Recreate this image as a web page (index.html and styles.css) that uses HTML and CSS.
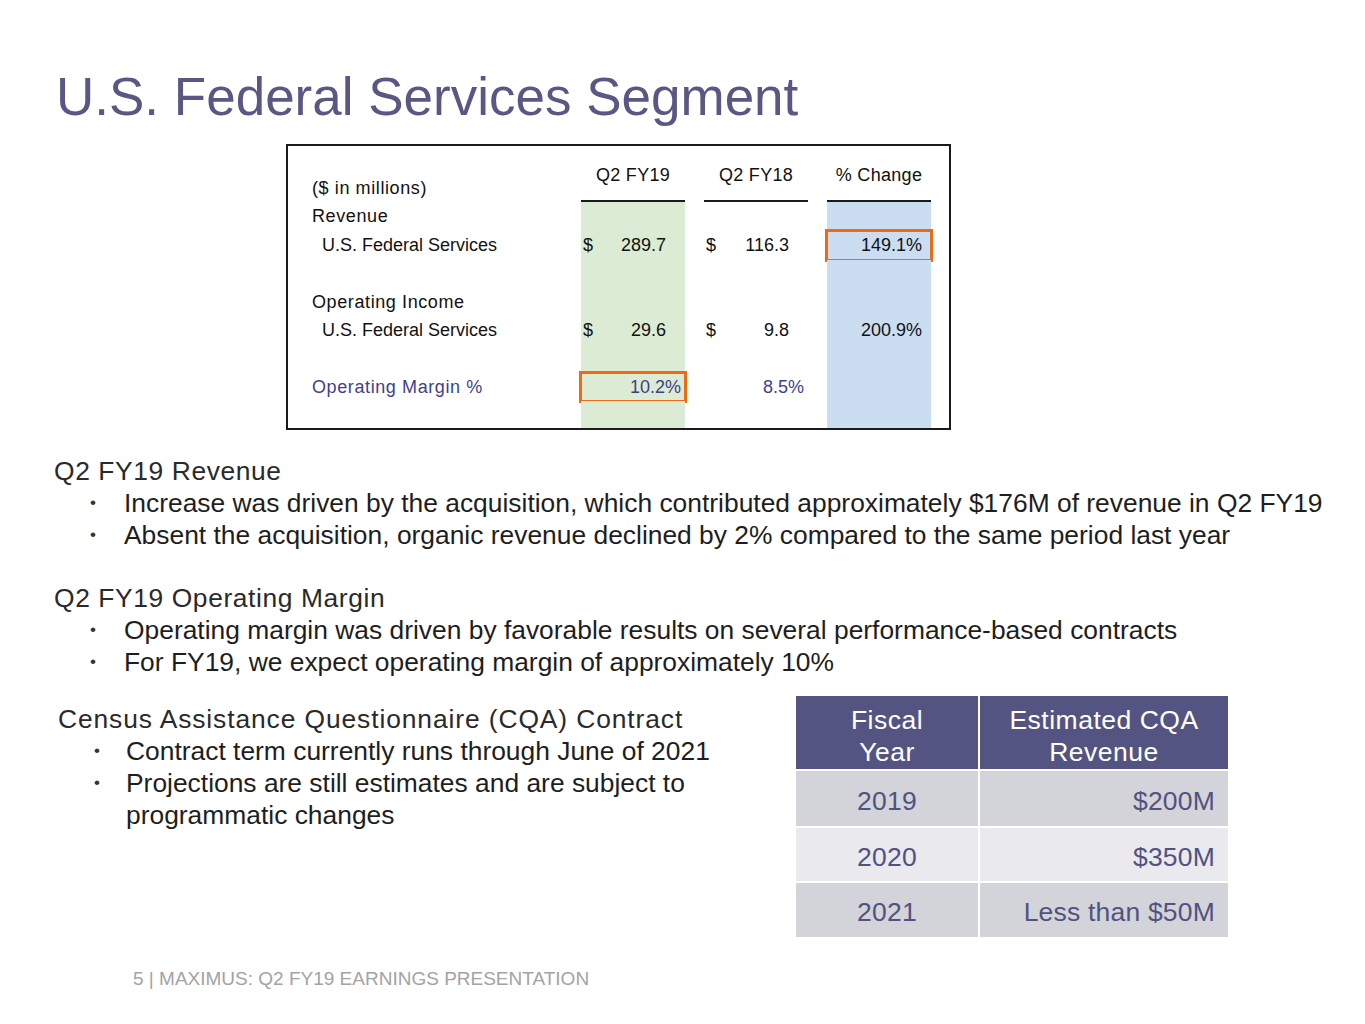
FILE: index.html
```html
<!DOCTYPE html>
<html>
<head>
<meta charset="utf-8">
<link rel="stylesheet" href="styles.css">
</head>
<body>
<div class="slide">
  <h1 class="title">U.S. Federal Services Segment</h1>

  <div class="fin">
    <div class="fin-grid">
      <!-- header row -->
      <div class="c lbl hdr-lbl">($ in millions)</div>
      <div class="c colh">Q2 FY19</div>
      <div class="c sp"></div>
      <div class="c colh">Q2 FY18</div>
      <div class="c sp"></div>
      <div class="c colh">% Change</div>
      <div class="c sp"></div>

      <!-- Revenue -->
      <div class="c lbl">Revenue</div>
      <div class="c g"></div><div class="c sp"></div><div class="c"></div><div class="c sp"></div><div class="c b"></div><div class="c sp"></div>

      <div class="c lbl sub">U.S. Federal Services</div>
      <div class="c g num"><span>$</span><span class="v">289.7</span></div><div class="c sp"></div>
      <div class="c num"><span>$</span><span class="v">116.3</span></div><div class="c sp"></div>
      <div class="c b pct hl">149.1%</div><div class="c sp"></div>

      <div class="c lbl"></div>
      <div class="c g"></div><div class="c sp"></div><div class="c"></div><div class="c sp"></div><div class="c b"></div><div class="c sp"></div>

      <!-- Operating income -->
      <div class="c lbl">Operating Income</div>
      <div class="c g"></div><div class="c sp"></div><div class="c"></div><div class="c sp"></div><div class="c b"></div><div class="c sp"></div>

      <div class="c lbl sub">U.S. Federal Services</div>
      <div class="c g num"><span>$</span><span class="v">29.6</span></div><div class="c sp"></div>
      <div class="c num"><span>$</span><span class="v">9.8</span></div><div class="c sp"></div>
      <div class="c b pct">200.9%</div><div class="c sp"></div>

      <div class="c lbl"></div>
      <div class="c g"></div><div class="c sp"></div><div class="c"></div><div class="c sp"></div><div class="c b"></div><div class="c sp"></div>

      <!-- Operating margin -->
      <div class="c lbl om">Operating Margin %</div>
      <div class="c g pm om hl">10.2%</div><div class="c sp"></div>
      <div class="c pm om">8.5%</div><div class="c sp"></div>
      <div class="c b"></div><div class="c sp"></div>

      <div class="c lbl"></div>
      <div class="c g"></div><div class="c sp"></div><div class="c"></div><div class="c sp"></div><div class="c b"></div><div class="c sp"></div>
    </div>
  </div>

  <div class="sec">
    <div class="sec-h">Q2 FY19 Revenue</div>
    <ul class="bul">
      <li>Increase was driven by the acquisition, which contributed approximately $176M of revenue in Q2 FY19</li>
      <li>Absent the acquisition, organic revenue declined by 2% compared to the same period last year</li>
    </ul>
  </div>

  <div class="sec sec2">
    <div class="sec-h">Q2 FY19 Operating Margin</div>
    <ul class="bul">
      <li>Operating margin was driven by favorable results on several performance-based contracts</li>
      <li>For FY19, we expect operating margin of approximately 10%</li>
    </ul>
  </div>

  <div class="cqa">
    <div class="cqa-text">
      <div class="sec-h cqa-h">Census Assistance Questionnaire (CQA) Contract</div>
      <ul class="bul bul2">
        <li>Contract term currently runs through June of 2021</li>
        <li>Projections are still estimates and are subject to programmatic changes</li>
      </ul>
    </div>
    <div class="cqa-table">
      <div class="th">Fiscal<br>Year</div>
      <div class="th">Estimated CQA<br>Revenue</div>
      <div class="td yr dark">2019</div>
      <div class="td amt dark">$200M</div>
      <div class="td yr light">2020</div>
      <div class="td amt light">$350M</div>
      <div class="td yr dark">2021</div>
      <div class="td amt dark">Less than $50M</div>
    </div>
  </div>

  <div class="footer">5 | MAXIMUS: Q2 FY19 EARNINGS PRESENTATION</div>
</div>
</body>
</html>
```

FILE: styles.css
```css
* { box-sizing: border-box; }
html, body { margin: 0; padding: 0; background: #fff; }
body { font-family: "Liberation Sans", Arial, sans-serif; color: #222; }

.slide { width: 1365px; height: 1024px; padding-top: 65px; }

.title {
  margin: 0 0 15px 56px;
  font-size: 53px;
  line-height: 64px;
  font-weight: normal;
  color: #595884;
}

.fin {
  margin-left: 286px;
  width: 665px;
  height: 286px;
  border: 2px solid #1a1a1a;
}
.fin-grid {
  display: grid;
  grid-template-columns: 293px 104px 19px 104px 19px 104px 18px;
  grid-template-rows: 56px 29px 29px 28px 28px 29px 28px 28px 27px;
  font-size: 18px;
  color: #111;
}
.c { display: flex; align-items: center; }
.lbl { padding-left: 24px; letter-spacing: 0.6px; }
.hdr-lbl { align-items: flex-end; padding-bottom: 3px; }
.sub { padding-left: 34px; letter-spacing: 0; }
.colh {
  justify-content: center;
  align-items: flex-start;
  padding-top: 19px;
  border-bottom: 2px solid #1a1a1a;
  letter-spacing: 0.3px;
}
.g { background: #dcebd3; }
.b { background: #cbddf1; }
.num { justify-content: space-between; padding-left: 2px; padding-right: 19px; }
.pct { justify-content: flex-end; padding-right: 9px; }
.pm { justify-content: flex-end; padding-right: 4px; letter-spacing: 0; }
.om { color: #3f3f8c; }
.hl { outline: 3px solid #ee6b16; outline-offset: -1px; }

.sec { margin-top: 25px; padding-left: 54px; }
.sec2 { margin-top: 31px; }
.sec-h {
  font-size: 26.4px;
  line-height: 32px;
  color: #2a2a2a;
  letter-spacing: 0.6px;
}
.bul {
  list-style: none;
  margin: 0;
  padding: 0 0 0 70px;
  font-size: 26.4px;
  line-height: 32px;
  color: #1e1e1e;
}
.bul li { position: relative; }
.bul li::before {
  content: "\2022";
  position: absolute;
  left: -34px;
  font-size: 17px;
  color: #333;
}

.cqa {
  display: flex;
  margin-top: 18px;
  height: 241px;
}
.cqa-text { width: 796px; padding-left: 58px; padding-top: 7px; }
.cqa-h { letter-spacing: 0.9px; }
.bul2 { padding-left: 68px; max-width: 680px; }
.bul2 li::before { left: -32px; }

.cqa-table {
  display: grid;
  grid-template-columns: 182px 248px;
  grid-template-rows: 73px 55px 53px 54px;
  gap: 2px;
  width: 432px;
}
.th {
  background: #545482;
  color: #fff;
  font-size: 26.5px;
  line-height: 32px;
  text-align: center;
  padding-top: 8px;
  letter-spacing: 0.5px;
}
.td {
  display: flex;
  align-items: center;
  font-size: 26.5px;
  color: #52527f;
  letter-spacing: 0.2px;
  padding-top: 5px;
}
.yr { justify-content: center; }
.amt { justify-content: flex-end; padding-right: 13px; }
.dark { background: #d3d3da; }
.light { background: #e9e9ee; }

.footer {
  margin-top: 32px;
  padding-left: 133px;
  font-size: 19px;
  line-height: 20px;
  color: #a3a3a3;
}
```
